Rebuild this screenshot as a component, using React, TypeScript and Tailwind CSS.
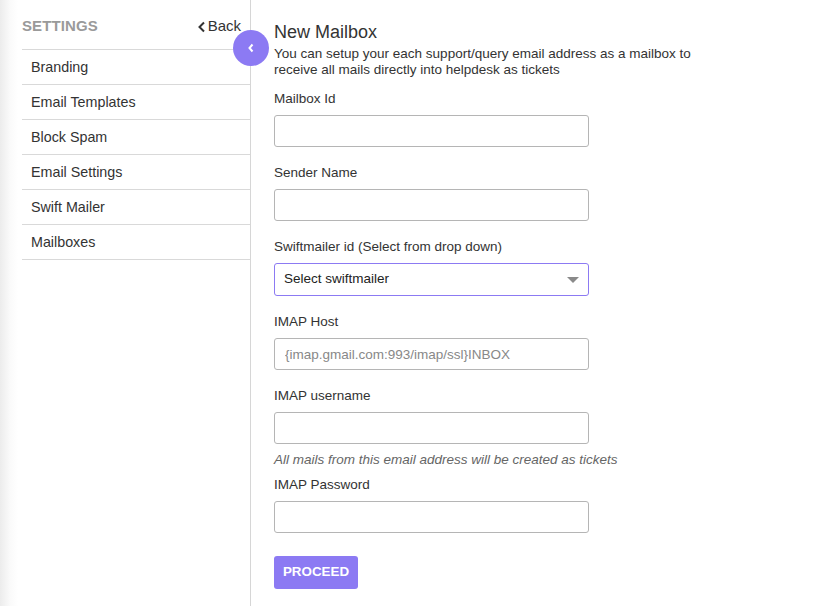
import React from "react";

const items = ["Branding", "Email Templates", "Block Spam", "Email Settings", "Swift Mailer", "Mailboxes"];

function Field({ label, placeholder }: { label: string; placeholder?: string }) {
  return (
    <div className="flex flex-col">
      <label className="pt-[1px] text-[13.5px] leading-4 text-[#333]">{label}</label>
      <input
        placeholder={placeholder}
        className="mt-[8px] h-[32px] w-[315px] rounded-[3px] border border-[#b5b5b5] px-[10px] text-[13.5px] text-[#333] outline-none placeholder:text-[#888]"
      />
    </div>
  );
}

export default function App() {
  return (
    <div
      className="flex h-[606px] w-[832px] overflow-hidden bg-white"
      style={{ fontFamily: '"Liberation Sans", Arial, sans-serif' }}
    >
      <div className="relative flex w-[251px] shrink-0 border-r border-[#d6d6d6] bg-[linear-gradient(to_right,#ececec_0px,#fafafa_10px,#ffffff_18px)] pl-[22px]">
        <div className="flex w-full flex-col">
          <div className="flex h-[50px] items-center justify-between border-b border-[#d9d9d9] pt-[3px]">
            <span className="text-[15px] font-bold tracking-[0.1px] text-[#9a9a9a]">SETTINGS</span>
            <span className="flex items-center gap-[2px] pr-[9px] text-[15px] text-[#333]">
              <svg width="9" height="12" viewBox="0 0 9 12" className="mt-[2px]">
                <path d="M7 1.5 L2.5 6 L7 10.5" stroke="#333" strokeWidth="2" fill="none" />
              </svg>
              Back
            </span>
          </div>
          {items.map((it) => (
            <div
              key={it}
              className="flex h-[35px] items-center border-b border-[#d9d9d9] pl-[9px] pt-[1px] text-[14.3px] text-[#333]"
            >
              {it}
            </div>
          ))}
        </div>
        <div className="absolute left-[233px] top-[30px] flex h-[36px] w-[36px] items-center justify-center rounded-full bg-[#8c7af3]">
          <svg width="8" height="10" viewBox="0 0 8 10">
            <path d="M5.5 1.5 L2.5 5 L5.5 8.5" stroke="#fff" strokeWidth="2" fill="none" />
          </svg>
        </div>
      </div>

      <div className="flex flex-col pl-[23px] pt-[21px]">
        <h1 className="text-[18px] leading-[22px] text-[#333]">New Mailbox</h1>
        <p className="mt-[3px] text-[13.5px] leading-4 text-[#333]">
          You can setup your each support/query email address as a mailbox to
          <br />
          receive all mails directly into helpdesk as tickets
        </p>
        <div className="mt-[12px] flex flex-col gap-[17px]">
          <Field label="Mailbox Id" />
          <Field label="Sender Name" />
          <div className="flex flex-col">
            <label className="pt-[1px] text-[13.5px] leading-4 text-[#333]">Swiftmailer id (Select from drop down)</label>
            <div className="mt-[8px] flex h-[33px] w-[315px] items-center justify-between rounded-[3px] border border-[#8c7af3] pl-[9px] pr-[9px] text-[13.5px] text-[#222]">
              <span>Select swiftmailer</span>
              <svg width="12" height="6" viewBox="0 0 12 6">
                <path d="M0 0 L12 0 L6 6 Z" fill="#8a8a8a" />
              </svg>
            </div>
          </div>
          <Field label="IMAP Host" placeholder="{imap.gmail.com:993/imap/ssl}INBOX" />
          <div className="flex flex-col">
            <Field label="IMAP username" />
            <p className="mt-[8px] text-[13.5px] italic leading-4 text-[#666]">
              All mails from this email address will be created as tickets
            </p>
            <div className="mt-[8px]">
              <Field label="IMAP Password" />
            </div>
          </div>
        </div>
        <button className="mt-[23px] h-[33px] w-[84px] rounded-[3px] bg-[#8c7af3] text-[13.4px] font-bold text-white">
          PROCEED
        </button>
      </div>
    </div>
  );
}
